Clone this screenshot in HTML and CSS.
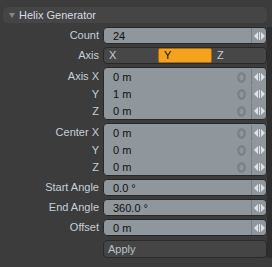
FILE: index.html
```html
<!DOCTYPE html>
<html lang="en">
<head>
  <meta charset="UTF-8">
  <title>Helix Generator</title>
  <link rel="stylesheet" href="styles.css">
</head>
<body>
  <div class="panel">
    <div class="header"><span class="tri"></span>Helix Generator</div>

    <div class="form">
      <div class="row">
        <div class="label">Count</div>
        <div class="field">
          <div class="line"><span class="val">24</span><span class="spin"><svg width="11" height="10" viewBox="0 0 11 10"><polygon points="0,5 4,1 4,9"/><rect x="5" y="1" width="1" height="8"/><polygon points="7,1 11,5 7,9"/></svg></span></div>
        </div>
      </div>

      <div class="row">
        <div class="label">Axis</div>
        <div class="field choice">
          <span class="opt">X</span>
          <span class="opt on">Y</span>
          <span class="opt">Z</span>
        </div>
      </div>

      <div class="row group">
        <div class="labels">
          <div class="label">Axis X</div>
          <div class="label">Y</div>
          <div class="label">Z</div>
        </div>
        <div class="field">
          <div class="line"><span class="val">0 m</span><svg class="zero" width="9" height="11" viewBox="0 0 9 11"><ellipse cx="4.5" cy="5.5" rx="3.2" ry="4.2"/></svg><span class="spin"><svg width="11" height="10" viewBox="0 0 11 10"><polygon points="0,5 4,1 4,9"/><rect x="5" y="1" width="1" height="8"/><polygon points="7,1 11,5 7,9"/></svg></span></div>
          <div class="line"><span class="val">1 m</span><svg class="zero" width="9" height="11" viewBox="0 0 9 11"><ellipse cx="4.5" cy="5.5" rx="3.2" ry="4.2"/></svg><span class="spin"><svg width="11" height="10" viewBox="0 0 11 10"><polygon points="0,5 4,1 4,9"/><rect x="5" y="1" width="1" height="8"/><polygon points="7,1 11,5 7,9"/></svg></span></div>
          <div class="line"><span class="val">0 m</span><svg class="zero" width="9" height="11" viewBox="0 0 9 11"><ellipse cx="4.5" cy="5.5" rx="3.2" ry="4.2"/></svg><span class="spin"><svg width="11" height="10" viewBox="0 0 11 10"><polygon points="0,5 4,1 4,9"/><rect x="5" y="1" width="1" height="8"/><polygon points="7,1 11,5 7,9"/></svg></span></div>
        </div>
      </div>

      <div class="row group">
        <div class="labels">
          <div class="label">Center X</div>
          <div class="label">Y</div>
          <div class="label">Z</div>
        </div>
        <div class="field">
          <div class="line"><span class="val">0 m</span><svg class="zero" width="9" height="11" viewBox="0 0 9 11"><ellipse cx="4.5" cy="5.5" rx="3.2" ry="4.2"/></svg><span class="spin"><svg width="11" height="10" viewBox="0 0 11 10"><polygon points="0,5 4,1 4,9"/><rect x="5" y="1" width="1" height="8"/><polygon points="7,1 11,5 7,9"/></svg></span></div>
          <div class="line"><span class="val">0 m</span><svg class="zero" width="9" height="11" viewBox="0 0 9 11"><ellipse cx="4.5" cy="5.5" rx="3.2" ry="4.2"/></svg><span class="spin"><svg width="11" height="10" viewBox="0 0 11 10"><polygon points="0,5 4,1 4,9"/><rect x="5" y="1" width="1" height="8"/><polygon points="7,1 11,5 7,9"/></svg></span></div>
          <div class="line"><span class="val">0 m</span><svg class="zero" width="9" height="11" viewBox="0 0 9 11"><ellipse cx="4.5" cy="5.5" rx="3.2" ry="4.2"/></svg><span class="spin"><svg width="11" height="10" viewBox="0 0 11 10"><polygon points="0,5 4,1 4,9"/><rect x="5" y="1" width="1" height="8"/><polygon points="7,1 11,5 7,9"/></svg></span></div>
        </div>
      </div>

      <div class="row">
        <div class="label">Start Angle</div>
        <div class="field">
          <div class="line"><span class="val">0.0 °</span><span class="spin"><svg width="11" height="10" viewBox="0 0 11 10"><polygon points="0,5 4,1 4,9"/><rect x="5" y="1" width="1" height="8"/><polygon points="7,1 11,5 7,9"/></svg></span></div>
        </div>
      </div>

      <div class="row">
        <div class="label">End Angle</div>
        <div class="field">
          <div class="line"><span class="val">360.0 °</span><span class="spin"><svg width="11" height="10" viewBox="0 0 11 10"><polygon points="0,5 4,1 4,9"/><rect x="5" y="1" width="1" height="8"/><polygon points="7,1 11,5 7,9"/></svg></span></div>
        </div>
      </div>

      <div class="row">
        <div class="label">Offset</div>
        <div class="field">
          <div class="line"><span class="val">0 m</span><span class="spin"><svg width="11" height="10" viewBox="0 0 11 10"><polygon points="0,5 4,1 4,9"/><rect x="5" y="1" width="1" height="8"/><polygon points="7,1 11,5 7,9"/></svg></span></div>
        </div>
      </div>

      <div class="row">
        <div></div>
        <button class="apply">Apply</button>
      </div>
    </div>
  </div>
</body>
</html>
```

FILE: styles.css
```css
body {
  margin: 0;
  background-color: #3c3c3c;
  font-family: "Liberation Sans", Arial, sans-serif;
  font-size: 11px;
}

.panel {
  width: 272px;
  height: 267px;
  padding-top: 7px;
  box-sizing: border-box;
}

.header {
  margin: 0 5px 0 3px;
  height: 16px;
  background-color: #454545;
  border-radius: 5px;
  color: #d6dce2;
  display: flex;
  align-items: center;
}

.tri {
  width: 0;
  height: 0;
  margin: 1px 4px 0 6px;
  border-left: 3px solid transparent;
  border-right: 3px solid transparent;
  border-top: 5px solid #80868c;
}

.form {
  margin-top: 4px;
  width: 267px;
  display: flex;
  flex-direction: column;
  gap: 3px;
  border-right: 5px solid #2e2e2e;
}

.row {
  display: grid;
  grid-template-columns: 99px 164px;
  column-gap: 4px;
}

.label {
  color: #c6cfd8;
  text-align: right;
  height: 17px;
  line-height: 17px;
}

.labels .label {
  height: 17.67px;
  line-height: 19px;
}

.field {
  background-color: #8f969c;
  border: 1px solid #282828;
  border-radius: 4px;
  box-sizing: border-box;
  overflow: hidden;
}

.line {
  display: flex;
  align-items: center;
  height: 15px;
}

.group .line {
  height: 17px;
  padding-top: 1px;
  box-sizing: border-box;
}

.val {
  flex: 1;
  padding-left: 9px;
  color: #111;
}

.zero {
  margin-right: 5px;
  fill: none;
  stroke: #7a8187;
  stroke-width: 2.4;
}

.spin {
  align-self: stretch;
  width: 14px;
  border-left: 1px solid #767d83;
  display: flex;
  align-items: center;
  justify-content: center;
}

.spin svg {
  fill: #dfe3e7;
}

.choice {
  background-color: #474747;
  display: grid;
  grid-template-columns: 1fr 1fr 1fr;
  height: 17px;
}

.opt {
  color: #c6cfd8;
  padding-left: 5px;
  line-height: 15px;
}

.opt.on {
  background-color: #f5a31f;
  border: 1px solid #a86a12;
  border-radius: 2px;
  color: #111;
  line-height: 13px;
}

.apply {
  height: 18px;
  margin-top: 1px;
  background-color: #454545;
  border: 1px solid #2a2a2a;
  border-radius: 4px;
  color: #b9c2cb;
  font-family: "Liberation Sans", Arial, sans-serif;
  font-size: 11px;
  text-align: left;
  padding: 0 0 0 4px;
}
```
